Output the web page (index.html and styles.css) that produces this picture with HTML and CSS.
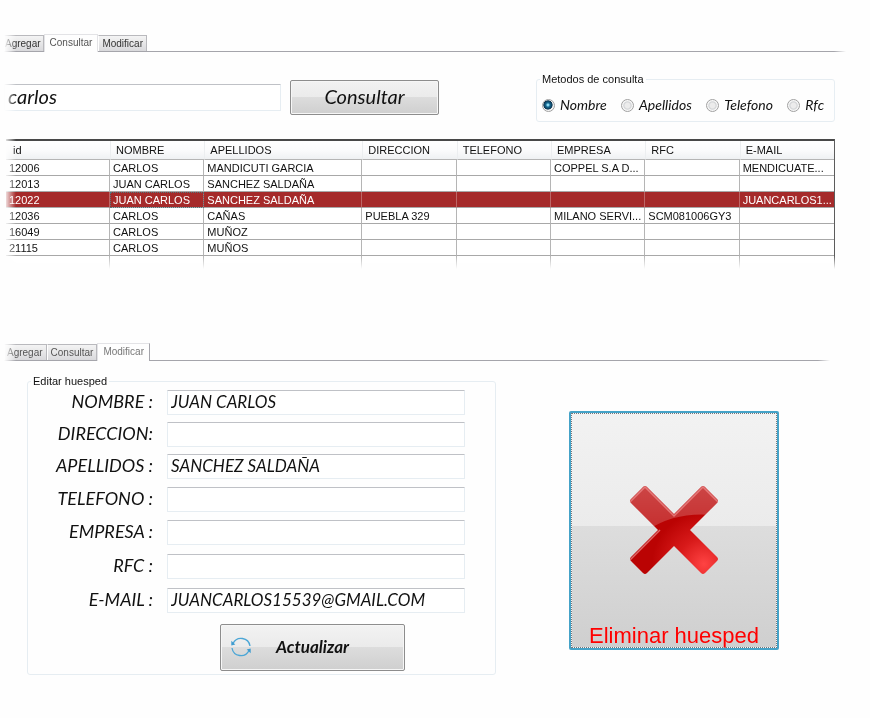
FILE: index.html
```html
<!DOCTYPE html>
<html lang="es">
<head>
<meta charset="utf-8">
<title>Huespedes</title>
<link rel="stylesheet" href="styles.css">
</head>
<body>
<section class="panel panel-search">
  <nav class="tabs">
    <button class="tab" type="button">Agregar</button>
    <button class="tab active" type="button">Consultar</button>
    <button class="tab" type="button">Modificar</button>
  </nav>
  <div class="search">
    <input class="field search-field" type="text" value="carlos" aria-label="Buscar huesped">
    <button class="btn search-btn" type="button">Consultar</button>
    <fieldset class="group methods">
      <legend>Metodos de consulta</legend>
      <div class="options">
        <label><input type="radio" name="metodo" checked>Nombre</label>
        <label><input type="radio" name="metodo">Apellidos</label>
        <label><input type="radio" name="metodo">Telefono</label>
        <label><input type="radio" name="metodo">Rfc</label>
      </div>
    </fieldset>
  </div>
  <table class="guests">
    <colgroup><col class="c-id"><col class="c-std"><col class="c-wide"><col class="c-std"><col class="c-std"><col class="c-std"><col class="c-std"><col class="c-std"></colgroup>
    <thead>
      <tr><th>id</th><th>NOMBRE</th><th>APELLIDOS</th><th>DIRECCION</th><th>TELEFONO</th><th>EMPRESA</th><th>RFC</th><th>E-MAIL</th></tr>
    </thead>
    <tbody>
      <tr><td>12006</td><td>CARLOS</td><td>MANDICUTI GARCIA</td><td></td><td></td><td>COPPEL S.A D...</td><td></td><td>MENDICUATE...</td></tr>
      <tr><td>12013</td><td>JUAN CARLOS</td><td>SANCHEZ SALDAÑA</td><td></td><td></td><td></td><td></td><td></td></tr>
      <tr class="selected"><td>12022</td><td class="current">JUAN CARLOS</td><td>SANCHEZ SALDAÑA</td><td></td><td></td><td></td><td></td><td>JUANCARLOS1...</td></tr>
      <tr><td>12036</td><td>CARLOS</td><td>CAÑAS</td><td>PUEBLA 329</td><td></td><td>MILANO SERVI...</td><td>SCM081006GY3</td><td></td></tr>
      <tr><td>16049</td><td>CARLOS</td><td>MUÑOZ</td><td></td><td></td><td></td><td></td><td></td></tr>
      <tr><td>21115</td><td>CARLOS</td><td>MUÑOS</td><td></td><td></td><td></td><td></td><td></td></tr>
      <tr class="more"><td></td><td></td><td></td><td></td><td></td><td></td><td></td><td></td></tr>
    </tbody>
  </table>
</section>

<section class="panel panel-edit">
  <nav class="tabs">
    <button class="tab" type="button">Agregar</button>
    <button class="tab" type="button">Consultar</button>
    <button class="tab active" type="button">Modificar</button>
  </nav>
  <div class="edit">
    <fieldset class="group guest">
      <legend>Editar huesped</legend>
      <div class="form">
        <label for="nombre">NOMBRE :</label><input class="field" id="nombre" type="text" value="JUAN CARLOS">
        <label for="direccion">DIRECCION:</label><input class="field" id="direccion" type="text">
        <label for="apellidos">APELLIDOS :</label><input class="field" id="apellidos" type="text" value="SANCHEZ SALDAÑA">
        <label for="telefono">TELEFONO :</label><input class="field" id="telefono" type="text">
        <label for="empresa">EMPRESA :</label><input class="field" id="empresa" type="text">
        <label for="rfc">RFC :</label><input class="field" id="rfc" type="text">
        <label for="email">E-MAIL :</label><input class="field" id="email" type="text" value="JUANCARLOS15539@GMAIL.COM">
      </div>
      <button class="btn update-btn" type="button">
        <svg width="20" height="20" viewBox="0 0 20 20" fill="none" stroke="#4ba6d6" stroke-width="1.3" aria-hidden="true">
          <path d="M2 6.5A9 9 0 0 1 19 9"/><path d="M18 13.500A9 9 0 0 1 1 11"/>
          <path d="M.3 3.800V8.500L4.300 7.500Z" fill="#3d9cd0" stroke="none"/><path d="M19.700 16.200V11.500L15.700 12.500Z" fill="#3d9cd0" stroke="none"/>
        </svg>
        <span>Actualizar</span>
      </button>
    </fieldset>
    <button class="btn delete-btn" type="button">
      <svg width="92" height="92" viewBox="0 0 92 92" aria-hidden="true">
        <defs>
          <radialGradient id="red" gradientUnits="userSpaceOnUse" cx="76" cy="80" r="52">
            <stop offset="0" stop-color="#ff4343"/><stop offset=".5" stop-color="#d81a1a"/><stop offset="1" stop-color="#ba0303"/>
          </radialGradient>
          <linearGradient id="gloss" x1="0" y1="0" x2="0" y2="1">
            <stop offset="0" stop-color="#fff" stop-opacity=".27"/><stop offset="1" stop-color="#fff" stop-opacity=".17"/>
          </linearGradient>
          <clipPath id="cross"><path d="M15 3Q17 1 19 3L46 30L73 3Q75 1 77 3L89 15Q91 17 89 19L62 46L89 73Q91 75 89 77L77 89Q75 91 73 89L46 62L19 89Q17 91 15 89L3 77Q1 75 3 73L30 46L3 19Q1 17 3 15Z"/></clipPath>
        </defs>
        <path d="M15 3Q17 1 19 3L46 30L73 3Q75 1 77 3L89 15Q91 17 89 19L62 46L89 73Q91 75 89 77L77 89Q75 91 73 89L46 62L19 89Q17 91 15 89L3 77Q1 75 3 73L30 46L3 19Q1 17 3 15Z" fill="url(#red)"/>
        <g clip-path="url(#cross)">
          <path d="M0 0H92V32Q50 26 20 46H0Z" fill="url(#gloss)"/>
          <path d="M2 18L17 3L46 32L75 3L90 18M2 76L32 46" fill="none" stroke="#f09090" stroke-width="1.500" opacity=".7"/>
        </g>
      </svg>
      <span>Eliminar huesped</span>
    </button>
  </div>
</section>
</body>
</html>
```

FILE: styles.css
```css
* { box-sizing: border-box; }

:root {
  --ui: "Liberation Sans", Arial, sans-serif;
  --script: "Lucida Handwriting", "Lucida Calligraphy", Lato, sans-serif;
  --line: #e6edf2;
}

body {
  margin: 0;
  padding: 34px 24px 40px 4px;
  background: #fefefe;
  color: #111;
  font-family: var(--ui);
  font-size: 11px;
}

button, input { font: inherit; color: inherit; }

.panel { mask-image: linear-gradient(to right, transparent, #000 12px, #000 calc(100% - 12px), transparent); }
.panel-edit { margin-top: 74px; margin-right: 16px; }

.tabs {
  display: flex;
  align-items: flex-end;
  height: 18px;
  border-bottom: 1px solid #a5a5ab;
}
.tab {
  height: 16px;
  padding: 0 3px;
  border: 1px solid #b9b9bd;
  border-bottom: 0;
  border-left-color: #fff;
  background: linear-gradient(#f4f4f4, #d9d9dc);
  color: #333;
  font-size: 10px;
  line-height: 15px;
}
.tab:first-child { padding: 0 2px 0 0; }
.tab.active {
  height: 18px;
  margin-bottom: -1px;
  padding: 0 5px 2px;
  border-color: #e3e3e6;
  background: #fefefe;
  color: #555;
}
.panel-edit .tab { color: #555; }
.panel-edit .tab:first-child { padding: 0 3px 0 2px; }
.panel-edit .tab.active { border-right-color: #a5a5ab; color: #777; }

.field {
  width: 100%;
  height: 25px;
  padding: 0 3px 3px;
  border: 1px solid var(--line);
  border-top: 1px solid #bfc1c6;
  border-radius: 1px;
  background: #fff;
  font-family: var(--script);
  font-style: italic;
  font-size: 17px;
}

.btn {
  border: 1px solid #8d8d8d;
  border-radius: 2px;
  background: linear-gradient(#f2f2f2, #ebebeb 48%, #dddddd 48%, #cfcfcf);
  box-shadow: inset 0 0 0 1px #f6f6f6;
  font-family: var(--script);
  font-style: italic;
}

.group {
  min-width: 0;
  margin: 0;
  padding: 0;
  border: 1px solid var(--line);
  border-radius: 3px;
}
.group legend {
  margin-left: 3px;
  padding: 0 2px;
  line-height: 12px;
}

.search {
  display: grid;
  grid-template-columns: 277fr 149fr 387fr;
  column-gap: 9px;
  align-items: center;
  padding: 21px 11px 17px 0;
}
.search-field {
  height: 27px;
  font-size: 20px;
}
.search-btn {
  height: 35px;
  padding: 0 6px 4px;
  font-size: 20px;
}
.methods { height: 49px; margin-left: 88px; }
.options {
  display: flex;
  justify-content: space-between;
  padding: 10px 10px 0 5px;
}
.options label {
  display: flex;
  align-items: center;
  gap: 5px;
  font-family: var(--script);
  font-style: italic;
  font-size: 14px;
  line-height: 20px;
}
.options input {
  appearance: none;
  width: 13px;
  height: 13px;
  margin: 0;
  border: 1px solid #a0a0a0;
  border-radius: 50%;
  background: radial-gradient(#ececec 30%, #d2d4d6 48%, #f7f7f7 60%);
}
.options input:checked { background: radial-gradient(circle at 45% 45%, #8fdcf5 8%, #156a92 25%, #0d3550 50%, #f4f4f4 58%); }

.guests {
  width: calc(100% - 13px);
  margin-left: 2px;
  table-layout: fixed;
  border-collapse: separate;
  border-spacing: 0;
  border-top: 2px solid #484848;
  border-right: 1px solid #555;
  background: #fff;
  mask-image: linear-gradient(to top, transparent, #000 13px);
}
.c-id { width: 104px; }
.c-wide { width: 158px; }
th {
  height: 19px;
  padding: 0 7px;
  border-bottom: 1px solid #b5b5b5;
  background: linear-gradient(#fff, #fbfbfc 50%, #eff1f3);
  font-weight: normal;
  line-height: 12px;
  text-align: left;
}
th + th { border-left: 1px solid #eceef0; padding-left: 5px; }
td {
  height: 16px;
  padding: 1px 2px 0 3px;
  border-right: 1px solid #b5b5b5;
  border-bottom: 1px solid #a8a8a8;
  line-height: 14px;
  white-space: nowrap;
  overflow: hidden;
}
td:last-child { border-right: 0; }
.selected td { background: #a52a2a; border-right-color: #bd6767; color: #fff; }
.selected .current { outline: 1px dotted #55757c; outline-offset: -1px; }
.more td { height: 13px; padding: 0; border-bottom: 0; }

.edit {
  display: grid;
  grid-template-columns: 469fr 210fr;
  gap: 73px;
  align-items: start;
  padding: 14px 51px 0 23px;
}
.guest { height: 300px; padding-right: 30px; }
.form {
  display: grid;
  grid-template-columns: 125px 1fr;
  grid-template-rows: 32px 32px 33px 33px 34px 34px 25px;
  column-gap: 14px;
  padding-top: 3px;
}
.form label {
  font-family: var(--script);
  font-style: italic;
  font-size: 18px;
  line-height: 22px;
  text-align: right;
  white-space: nowrap;
}
.update-btn {
  display: flex;
  align-items: center;
  gap: 25px;
  width: 185px;
  height: 47px;
  margin: 11px 0 0 192px;
  padding: 0 10px 2px;
  font-size: 17px;
  font-weight: bold;
}
.delete-btn {
  display: flex;
  flex-direction: column;
  align-items: center;
  justify-content: flex-end;
  height: 239px;
  margin-top: 36px;
  padding: 0;
  border: 2px solid #45a3c8;
  outline: 1px dotted #77777a;
  outline-offset: -3px;
  color: #f00;
  font-family: var(--ui);
  font-style: normal;
  font-size: 22px;
}
.delete-btn span { margin-top: 48px; line-height: 24px; }
```
